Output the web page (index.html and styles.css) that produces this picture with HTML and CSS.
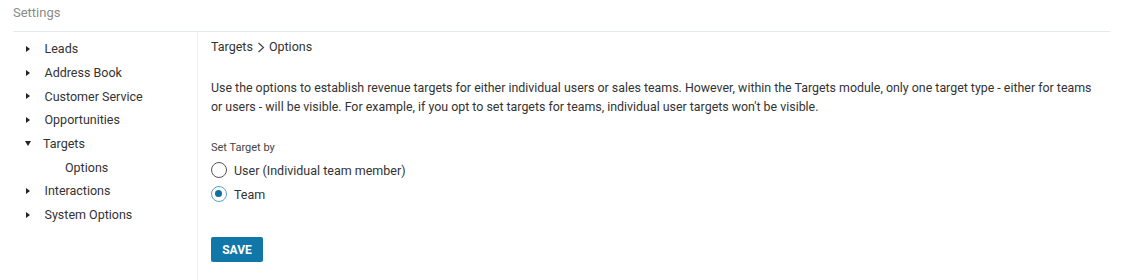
FILE: index.html
```html
<!DOCTYPE html>
<html>
<head>
<meta charset="utf-8">
<link rel="stylesheet" href="styles.css">
</head>
<body>
<div class="page">
  <div class="header">Settings</div>
  <div class="layout">
    <ul class="sidebar">
      <li class="item"><span class="caret"></span>Leads</li>
      <li class="item"><span class="caret"></span>Address Book</li>
      <li class="item"><span class="caret"></span>Customer Service</li>
      <li class="item"><span class="caret"></span>Opportunities</li>
      <li class="item"><span class="caret open"></span>Targets</li>
      <li class="item sub">Options</li>
      <li class="item"><span class="caret"></span>Interactions</li>
      <li class="item"><span class="caret"></span>System Options</li>
    </ul>
    <div class="content">
      <div class="crumbs">Targets <svg class="chev" width="8" height="11" viewBox="0 0 8 11"><path d="M1.5 1 L6.5 5.5 L1.5 10" fill="none" stroke="#444" stroke-width="1.2"/></svg> Options</div>
      <p class="desc">Use the options to establish revenue targets for either individual users or sales teams. However, within the Targets module, only one target type - either for teams or users - will be visible. For example, if you opt to set targets for teams, individual user targets won't be visible.</p>
      <div class="label">Set Target by</div>
      <label class="radio-row"><span class="radio"></span>User (Individual team member)</label>
      <label class="radio-row"><span class="radio checked"></span>Team</label>
      <button class="save">SAVE</button>
    </div>
  </div>
</div>
</body>
</html>
```
FILE: styles.css
```css
html, body {
  margin: 0;
  padding: 0;
  background: #fff;
}
body {
  font-family: Roboto, "Liberation Sans", sans-serif;
  color: #3a3a3a;
  width: 1123px;
  height: 280px;
  overflow: hidden;
}
.page {
  padding: 0 13px;
}
.header {
  height: 32px;
  box-sizing: border-box;
  padding-top: 4px;
  font-size: 13px;
  line-height: 17px;
  color: #8a8a8a;
  border-bottom: 1px solid #e4e9ef;
}
.layout {
  display: flex;
  height: 250px;
}
.sidebar {
  list-style: none;
  margin: 0;
  padding: 5px 0 0 0;
  width: 184px;
  flex: none;
  border-right: 1px solid #eef2f5;
}
.item {
  display: flex;
  align-items: center;
  height: 23.7px;
  font-size: 12.5px;
  color: #333;
  padding-left: 13px;
}
.item.sub {
  padding-left: 52px;
}
.caret {
  width: 0;
  height: 0;
  border-top: 3.5px solid transparent;
  border-bottom: 3.5px solid transparent;
  border-left: 4.5px solid #222;
  margin-right: 14.5px;
}
.caret.open {
  border-left: 3.5px solid transparent;
  border-right: 3.5px solid transparent;
  border-top: 5px solid #222;
  border-bottom: 0;
  margin-left: -1px;
  margin-right: 12px;
}
.content {
  padding: 7px 0 0 13px;
  flex: 1;
}
.crumbs {
  font-size: 12.5px;
  line-height: 16px;
  color: #333;
  display: flex;
  align-items: center;
  gap: 4px;
}
.desc {
  margin: 23px 0 0 0;
  font-size: 12.4px;
  line-height: 19px;
  color: #333;
  padding-right: 10px;
}
.label {
  margin-top: 25px;
  font-size: 11px;
  line-height: 14px;
  color: #444;
}
.radio-row {
  display: flex;
  align-items: center;
  height: 24px;
  font-size: 12.5px;
  color: #333;
}
.radio-row:first-of-type {
  margin-top: 3px;
}
.radio {
  width: 16px;
  height: 16px;
  box-sizing: border-box;
  border: 1.3px solid #555;
  border-radius: 50%;
  margin-right: 7px;
  position: relative;
}
.radio.checked {
  border-color: #5aa3c9;
}
.radio.checked::after {
  content: "";
  position: absolute;
  left: 3px;
  top: 3px;
  width: 7.4px;
  height: 7.4px;
  border-radius: 50%;
  background: #0f6fa0;
}
.save {
  display: block;
  margin-top: 31px;
  width: 52px;
  height: 25px;
  background: #1177a8;
  color: #fff;
  border: 0;
  border-radius: 2px;
  font-family: Roboto, "Liberation Sans", sans-serif;
  font-weight: 700;
  font-size: 12px;
  padding: 0;
}
```
